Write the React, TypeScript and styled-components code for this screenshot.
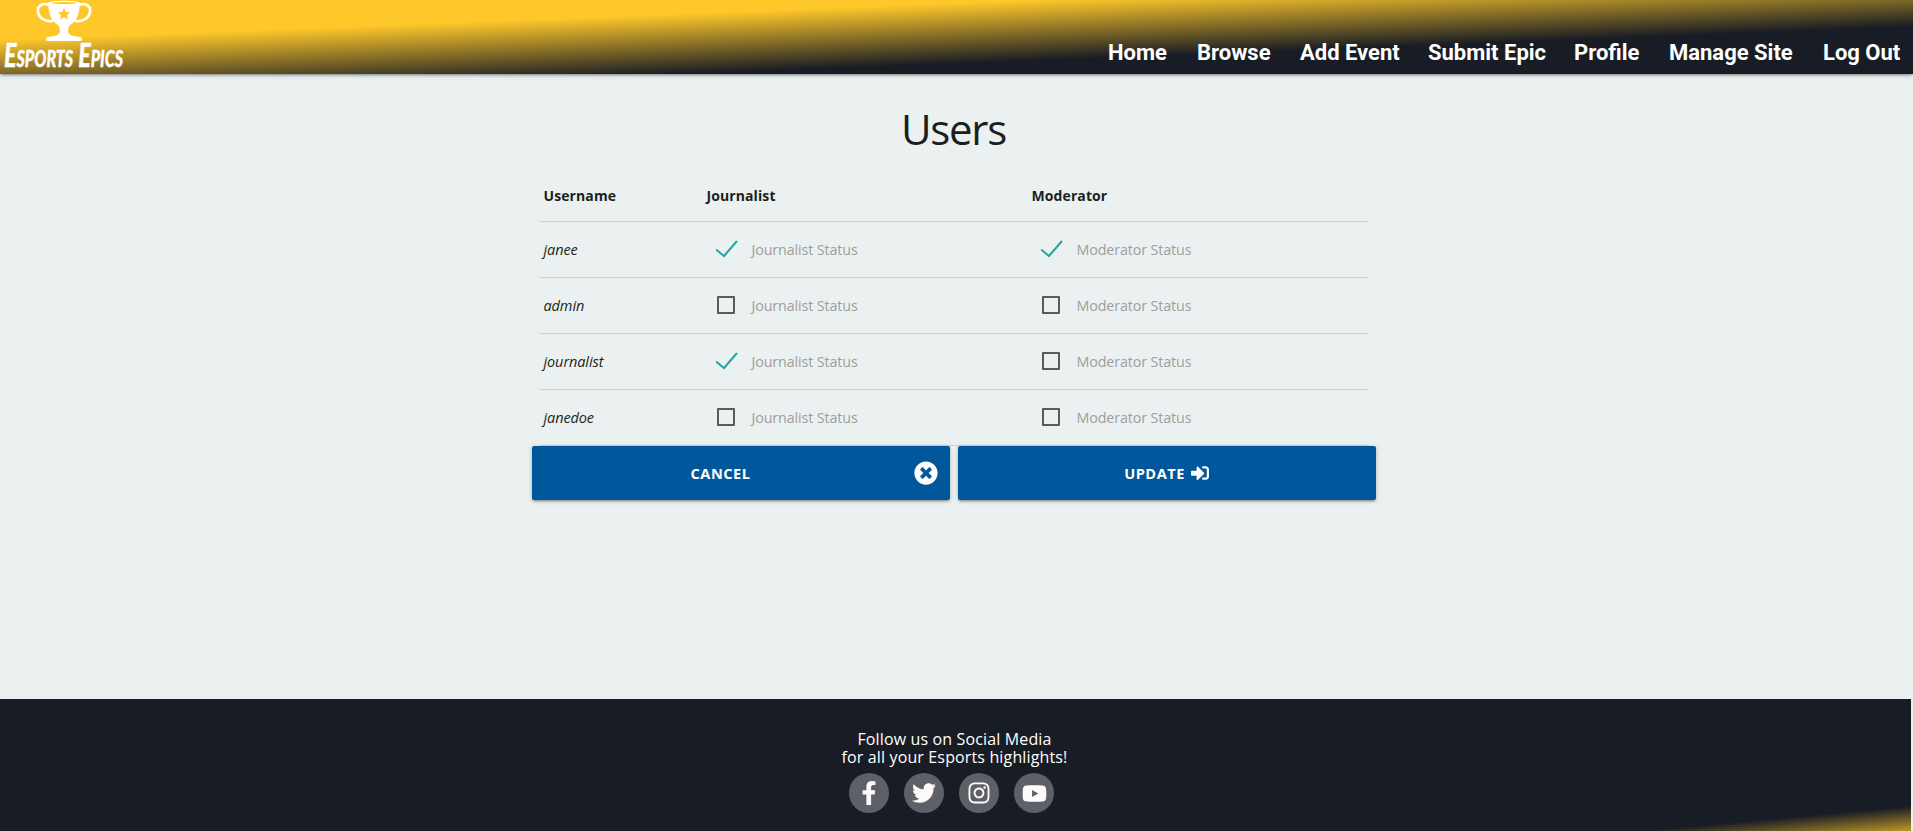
import React from "react";
import styled, { createGlobalStyle } from "styled-components";
import { FaFacebookF, FaTwitter, FaTimesCircle, FaSignInAlt, FaYoutube, FaInstagram } from "react-icons/fa";

const Global = createGlobalStyle`
  * { box-sizing: border-box; }
  body { margin: 0; background: #ebf1f1; font-family: "Open Sans", "Noto Sans", sans-serif; color: #1b1f20; overflow: hidden; }
`;

const Page = styled.div`
  display: flex;
  flex-direction: column;
  width: 1911px;
  height: 831px;
`;

const Header = styled.header`
  display: flex;
  justify-content: space-between;
  flex: 0 0 74px;
  width: 1913px;
  background: linear-gradient(to bottom right, #ffc82a 27%, #181c24 68%);
  box-shadow: 0 2px 2px 0 rgba(0,0,0,.14), 0 3px 1px -2px rgba(0,0,0,.12), 0 1px 5px 0 rgba(0,0,0,.2);
`;

const Brand = styled.div`
  display: flex;
  flex-direction: column;
  align-items: center;
  width: 128px;
  color: #fff;
`;

const BrandText = styled.svg`
  display: block;
  width: 128px;
  height: 32px;
  overflow: visible;
  text {
    font-family: Lato, sans-serif;
    font-size: 32px;
    font-weight: 900;
    font-style: italic;
    font-variant: small-caps;
    fill: #fff;
    stroke: #fff;
    stroke-width: .4px;
  }
`;

const Nav = styled.nav`
  display: flex;
  gap: 30px;
  padding: 40px 12px 0 0;
`;

const NavLink = styled.a<{ $w: number }>`
  font: 700 22px/26px Roboto, sans-serif;
  color: #fff;
  white-space: nowrap;
  width: ${p => p.$w}px;
`;

const Main = styled.main`
  flex: 1;
  display: flex;
  flex-direction: column;
  align-items: center;
  padding-top: 26px;
  padding-right: 4px;
`;

const Title = styled.h1`
  margin: 0;
  font-size: 42px;
  line-height: 57px;
  font-weight: 400;
  letter-spacing: -1.3px;
`;

const Table = styled.div`
  width: 830px;
  margin-top: 14px;
`;

const Row = styled.div<{ $head?: boolean }>`
  display: grid;
  grid-template-columns: 163px 325px 1fr;
  align-items: center;
  height: ${p => (p.$head ? 51 : 56)}px;
  padding: 0 0 2px 5px;
  border-bottom: 1px solid #cdd3d4;
`;

const HeadCell = styled.div`
  font-size: 14px;
  font-weight: 700;
  letter-spacing: .1px;
`;

const Username = styled.div`
  font-size: 14.5px;
  font-style: italic;
  letter-spacing: -.1px;
  padding-top: 2px;
`;

const Status = styled.label`
  display: flex;
  align-items: center;
  padding-left: 9px;
  color: #9e9e9e;
  font-size: 14.3px;
  letter-spacing: -.12px;
`;

const StatusText = styled.span`
  padding-top: 2px;
`;

const Mark = styled.span`
  display: flex;
  width: 36px;
`;

const Box = styled.span`
  width: 18px;
  height: 18px;
  margin-left: 1px;
  border: 2px solid #5a5a5a;
  border-radius: 1px;
`;

const Actions = styled.div`
  display: flex;
  gap: 8px;
`;

const Button = styled.button`
  display: flex;
  align-items: center;
  width: 418px;
  height: 54px;
  padding: 0 12px;
  border: 0;
  border-radius: 2px;
  background: #01579b;
  color: #fff;
  font: 700 14.6px "Open Sans", sans-serif;
  letter-spacing: .5px;
  box-shadow: 0 2px 2px 0 rgba(0,0,0,.14), 0 3px 1px -2px rgba(0,0,0,.12), 0 1px 5px 0 rgba(0,0,0,.2);
`;

const ButtonLabel = styled.span<{ $inset?: number }>`
  flex: 1;
  display: flex;
  justify-content: center;
  align-items: center;
  gap: 6px;
  padding-right: ${p => p.$inset ?? 0}px;
`;

const Footer = styled.footer`
  flex: 0 0 132px;
  display: flex;
  flex-direction: column;
  align-items: center;
  padding: 31px 2px 0 0;
  background: linear-gradient(174.7deg, #181c24 283px, #ffc82a 318px);
  color: #fff;
`;

const FooterText = styled.p`
  margin: 0;
  font-size: 16px;
  line-height: 18px;
  letter-spacing: .14px;
  text-align: center;
`;

const Social = styled.div`
  display: flex;
  gap: 15px;
  margin: 7px 6px 0 0;
`;

const SocialLink = styled.a`
  display: flex;
  justify-content: center;
  align-items: center;
  width: 40px;
  height: 40px;
  border-radius: 50%;
  background: #5d6066;
  color: #fffafa;
`;

const Check = () => (
  <svg width="24" height="18" viewBox="1 0 24 18" fill="none" stroke="#26a69a" strokeWidth="2">
    <path d="M1 9.5 L9 16 L22 1" />
  </svg>
);

const Trophy = () => (
  <svg width="56" height="42" viewBox="0 0 56 42">
    <g fill="none" stroke="#fff" strokeWidth="2.6">
      <path d="M15 5.5 C6 2 1 6 2 12 C3 18 9 22 17 21" />
      <path d="M41 5.5 C50 2 55 6 54 12 C53 18 47 22 39 21" />
    </g>
    <path fill="#fff" d="M12 3 C12 0 44 0 44 3 C43 14 42 20 33 26 L32 31 C32 34 35 35 37 36 L44 37 C47 38 47 41 44 41 L12 41 C9 41 9 38 12 37 L19 36 C21 35 24 34 24 31 L23 26 C14 20 13 14 12 3Z" />
    <ellipse cx="28" cy="3" rx="13" ry="1" fill="#ffc82a" />
    <path fill="#ffc82a" d="M28 8 L29.8 12 L34 12.4 L31 15.3 L32 19.5 L28 17.3 L24 19.5 L25 15.3 L22 12.4 L26.2 12Z" />
  </svg>
);

const links: [string, number][] = [
  ["Home", 59], ["Browse", 73], ["Add Event", 98], ["Submit Epic", 116], ["Profile", 65], ["Manage Site", 124], ["Log Out", 78],
];

const users = [
  { name: "janee", journalist: true, moderator: true },
  { name: "admin", journalist: false, moderator: false },
  { name: "journalist", journalist: true, moderator: false },
  { name: "janedoe", journalist: false, moderator: false },
];

const StatusCell = ({ on, label }: { on: boolean; label: string }) => (
  <Status>
    <Mark>{on ? <Check /> : <Box />}</Mark>
    <StatusText>{label}</StatusText>
  </Status>
);

export default function App() {
  return (
    <Page>
      <Global />
      <Header>
        <Brand>
          <Trophy />
          <BrandText viewBox="0 0 128 32">
            <text x="4" y="24.5" textLength="119" lengthAdjust="spacingAndGlyphs">Esports Epics</text>
          </BrandText>
        </Brand>
        <Nav>
          {links.map(([label, w]) => <NavLink key={label} $w={w}>{label}</NavLink>)}
        </Nav>
      </Header>
      <Main>
        <Title>Users</Title>
        <Table>
          <Row $head>
            <HeadCell>Username</HeadCell>
            <HeadCell>Journalist</HeadCell>
            <HeadCell>Moderator</HeadCell>
          </Row>
          {users.map(u => (
            <Row key={u.name}>
              <Username>{u.name}</Username>
              <StatusCell on={u.journalist} label="Journalist Status" />
              <StatusCell on={u.moderator} label="Moderator Status" />
            </Row>
          ))}
        </Table>
        <Actions>
          <Button>
            <ButtonLabel $inset={16}>CANCEL</ButtonLabel>
            <FaTimesCircle size={24} />
          </Button>
          <Button>
            <ButtonLabel>UPDATE <FaSignInAlt size={18} /></ButtonLabel>
          </Button>
        </Actions>
      </Main>
      <Footer>
        <FooterText>Follow us on Social Media<br />for all your Esports highlights!</FooterText>
        <Social>
          <SocialLink><FaFacebookF size={24} /></SocialLink>
          <SocialLink><FaTwitter size={24} /></SocialLink>
          <SocialLink><FaInstagram size={24} /></SocialLink>
          <SocialLink><FaYoutube size={25} /></SocialLink>
        </Social>
      </Footer>
    </Page>
  );
}
